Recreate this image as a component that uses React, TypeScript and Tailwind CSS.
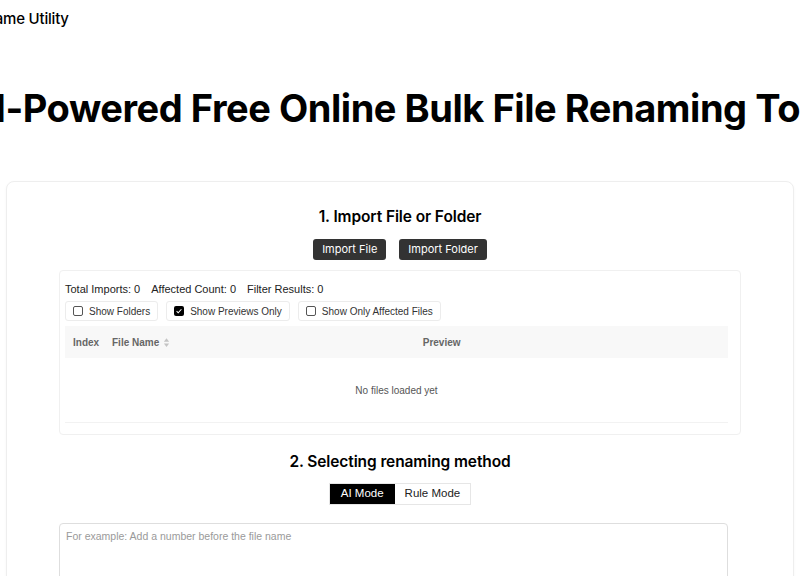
import { useState } from "react";

function CheckPill({ label, checked }: { label: string; checked?: boolean }) {
  return (
    <label className="flex h-[20px] items-center gap-[6px] rounded-[3px] border border-[#ececec] bg-white px-[7px] text-[10px] text-[#333]">
      <span
        className={
          checked
            ? "flex h-[10px] w-[10px] items-center justify-center rounded-[2px] bg-black"
            : "h-[10px] w-[10px] rounded-[2px] border border-[#555] bg-white"
        }
      >
        {checked && (
          <svg viewBox="0 0 10 10" className="h-[8px] w-[8px]">
            <path d="M2 5.2l2 2 4-4.4" fill="none" stroke="white" strokeWidth="1.3" />
          </svg>
        )}
      </span>
      {label}
    </label>
  );
}

function SortIcon() {
  return (
    <svg viewBox="0 0 8 12" className="ml-[4px] h-[11px] w-[7px]">
      <path d="M4 1L7 5H1z" fill="#c4c4c4" />
      <path d="M4 11L1 7h6z" fill="#c4c4c4" />
    </svg>
  );
}

export default function App() {
  const [mode, setMode] = useState<"ai" | "rule">("ai");

  return (
    <div className="min-h-screen overflow-hidden bg-white font-['Inter',sans-serif] text-black">
      {/* header */}
      <div className="flex h-[38px] items-center">
        <span className="ml-[-32px] text-[15px] font-medium tracking-[-0.2px]">Rename Utility</span>
      </div>

      {/* hero title */}
      <div className="flex justify-center pt-[45px] pb-[48px]">
        <h1 className="whitespace-nowrap text-[38px] font-bold leading-[50px] tracking-[-0.45px]">
          AI-Powered Free Online Bulk File Renaming Tool
        </h1>
      </div>

      {/* main card */}
      <div className="mx-[6px] rounded-[8px] border border-[#eeeeee] bg-white pt-[24px] shadow-[0_1px_3px_rgba(0,0,0,0.04)]">
        <h2 className="text-center text-[15.5px] font-semibold leading-[22px] tracking-[-0.1px]">
          1. Import File or Folder
        </h2>
        <div className="mt-[11px] flex justify-center gap-[13px]">
          <button className="h-[21px] rounded-[3px] bg-[#333] px-[9px] text-[11px] text-white">Import File</button>
          <button className="h-[21px] rounded-[3px] bg-[#333] px-[9px] text-[11px] text-white">Import Folder</button>
        </div>

        <div className="mx-[52px] mt-[10px] rounded-[4px] border border-[#f0f0f0] pl-[5px] pr-[12px] pt-[11px] pb-[11px] font-['Liberation_Sans',sans-serif]">
          <div className="flex gap-[11px] text-[11px] leading-[14px] text-[#222]">
            <span>Total Imports: 0</span>
            <span>Affected Count: 0</span>
            <span>Filter Results: 0</span>
          </div>
          <div className="mt-[5px] flex gap-[8px]">
            <CheckPill label="Show Folders" />
            <CheckPill label="Show Previews Only" checked />
            <CheckPill label="Show Only Affected Files" />
          </div>

          <div className="mt-[5px] flex h-[32px] items-center bg-[#f8f8f8] text-[10px] font-bold text-[#666]">
            <span className="w-[47px] pl-[8px]">Index</span>
            <span className="flex items-center">
              File Name
              <SortIcon />
            </span>
            <span className="flex-1 pr-[15px] text-center">Preview</span>
          </div>
          <div className="flex h-[65px] items-center justify-center border-b border-[#f2f2f2] text-[10px] text-[#555]">
            No files loaded yet
          </div>
        </div>

        <h2 className="mt-[16px] text-center text-[15.5px] font-semibold leading-[22px] tracking-[-0.1px]">
          2. Selecting renaming method
        </h2>
        <div className="mt-[10px] flex justify-center">
          <div className="flex h-[22px] border border-[#e6e6e6] font-['Liberation_Sans',sans-serif] text-[11.5px]">
            <button
              onClick={() => setMode("ai")}
              className={mode === "ai" ? "bg-black px-[11px] text-white" : "bg-white px-[11px] text-[#222]"}
            >
              AI Mode
            </button>
            <button
              onClick={() => setMode("rule")}
              className={mode === "rule" ? "bg-black px-[10px] text-white" : "bg-white px-[10px] text-[#222]"}
            >
              Rule Mode
            </button>
          </div>
        </div>

        <div className="mx-[52px] mt-[18px] pr-[13px]">
          <textarea
            placeholder="For example: Add a number before the file name"
            className="block h-[120px] w-full resize-none rounded-[4px] border border-[#dedede] px-[6px] py-[5px] font-['Liberation_Sans',sans-serif] text-[10.5px] text-[#333] outline-none placeholder:text-[#9a9a9a]"
          />
        </div>
      </div>
    </div>
  );
}
